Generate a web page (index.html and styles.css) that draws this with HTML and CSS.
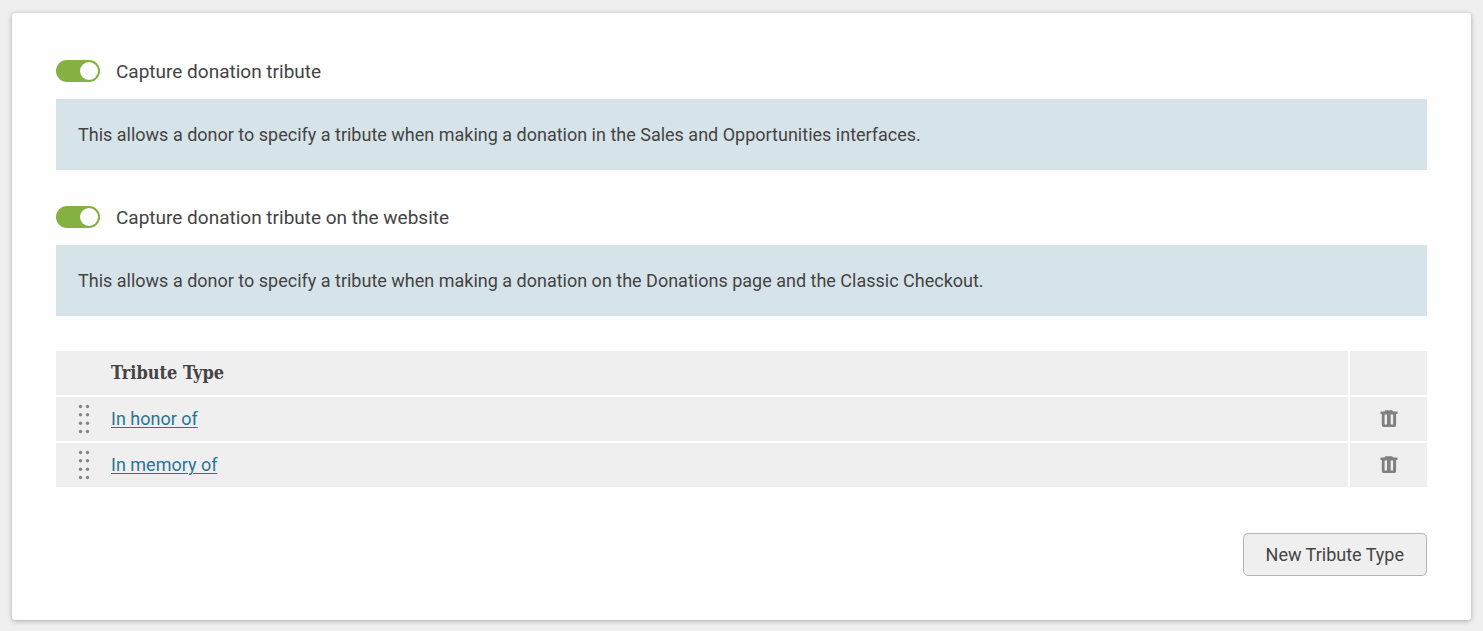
FILE: index.html
```html
<!DOCTYPE html>
<html lang="en">
<head>
<meta charset="utf-8">
<meta name="viewport" content="width=device-width, initial-scale=1">
<title>Tribute settings</title>
<link rel="stylesheet" href="styles.css">
</head>
<body>
<svg class="sprite" aria-hidden="true">
  <symbol id="grip" viewBox="0 0 12 30">
    <g fill="#858585">
      <circle cx="2.5" cy="2.5" r="1.7"/><circle cx="9.5" cy="2.5" r="1.7"/>
      <circle cx="2.5" cy="10.8" r="1.7"/><circle cx="9.5" cy="10.8" r="1.7"/>
      <circle cx="2.5" cy="19.2" r="1.7"/><circle cx="9.5" cy="19.2" r="1.7"/>
      <circle cx="2.5" cy="27.5" r="1.7"/><circle cx="9.5" cy="27.5" r="1.7"/>
    </g>
  </symbol>
  <symbol id="trash" viewBox="0 0 18 18">
    <path fill="#808080" fill-rule="evenodd" d="M4.500 1.500L5.200 .3h7.100l.7 1.200h4.500v2.400h-1.400V14.900q0 2.200-2.200 2.200H4q-2.200 0-2.200-2.200V3.900H.500V1.500zM4.600 4.500V14.500h2.400V4.500zM10.700 4.500V14.500h2.400V4.500z"/>
  </symbol>
</svg>
<main class="card">
  <section class="setting">
    <label class="toggle">
      <input class="switch" type="checkbox" role="switch" checked>
      <span>Capture donation tribute</span>
    </label>
    <p class="note">This allows a donor to specify a tribute when making a donation in the Sales and Opportunities interfaces.</p>
  </section>
  <section class="setting">
    <label class="toggle">
      <input class="switch" type="checkbox" role="switch" checked>
      <span>Capture donation tribute on the website</span>
    </label>
    <p class="note">This allows a donor to specify a tribute when making a donation on the Donations page and the Classic Checkout.</p>
  </section>
  <table class="types">
    <thead>
      <tr><th class="handle"></th><th class="name" scope="col">Tribute Type</th><th class="remove"></th></tr>
    </thead>
    <tbody>
      <tr>
        <td class="handle"><svg class="grip"><use href="#grip"/></svg></td>
        <td class="name"><a href="#honor">In honor of</a></td>
        <td class="remove"><button class="icon-button" type="button" aria-label="Delete In honor of"><svg class="trash"><use href="#trash"/></svg></button></td>
      </tr>
      <tr>
        <td class="handle"><svg class="grip"><use href="#grip"/></svg></td>
        <td class="name"><a href="#memory">In memory of</a></td>
        <td class="remove"><button class="icon-button" type="button" aria-label="Delete In memory of"><svg class="trash"><use href="#trash"/></svg></button></td>
      </tr>
    </tbody>
  </table>
  <div class="actions">
    <button class="button" type="button">New Tribute Type</button>
  </div>
</main>
</body>
</html>
```
FILE: styles.css
```css
* { box-sizing: border-box; }
body {
  margin: 0;
  padding: 13px 12px 11px;
  background: #efefef;
  color: #444;
  font: 18px/24px Roboto, sans-serif;
}
.sprite { position: absolute; width: 0; height: 0; }
.card {
  padding: 44px;
  background: #fefefe;
  border-radius: 3px;
  box-shadow: 0 1px 5px rgba(0, 0, 0, .3);
}
.setting { margin-bottom: 33px; }
.toggle {
  display: flex;
  align-items: center;
  gap: 16px;
  height: 28px;
  margin-bottom: 14px;
  font-size: 19px;
}
.toggle span { padding-top: 2px; }
.switch {
  appearance: none;
  display: flex;
  justify-content: flex-end;
  width: 44px;
  height: 22px;
  margin: 0;
  padding: 2px;
  border-radius: 11px;
  background: #85b143;
}
.switch::before {
  content: "";
  width: 18px;
  height: 18px;
  border-radius: 50%;
  background: #fefefe;
}
.switch:not(:checked) { justify-content: flex-start; background: #999; }
.note {
  margin: 0;
  padding: 24px 22px 23px;
  background: #d6e3e9;
}
.types {
  width: 100%;
  margin-top: 35px;
  border-spacing: 0;
}
.types th, .types td {
  height: 44px;
  padding: 0;
  background: #efefef;
  text-align: left;
}
.types td { height: 46px; border-top: 2px solid #fefefe; }
.types th { font: bold 18px/24px "Roboto Slab", "DejaVu Serif Condensed", "DejaVu Serif", serif; }
.types .handle { width: 55px; padding-left: 22px; }
.types .remove {
  width: 79px;
  border-left: 2px solid #fefefe;
  text-align: center;
}
.types a { color: #2b7496; text-decoration-thickness: 1px; text-underline-offset: 2px; }
.grip { display: block; width: 12px; height: 30px; }
.icon-button {
  display: inline-flex;
  padding: 4px;
  border: 0;
  background: none;
  vertical-align: middle;
}
.trash { width: 18px; height: 18px; }
.actions { display: flex; justify-content: flex-end; margin-top: 46px; }
.button {
  height: 43px;
  padding: 0 22px;
  border: 1px solid #b5b5b5;
  border-radius: 5px;
  background: #efefef;
  color: #444;
  font: inherit;
}
```
